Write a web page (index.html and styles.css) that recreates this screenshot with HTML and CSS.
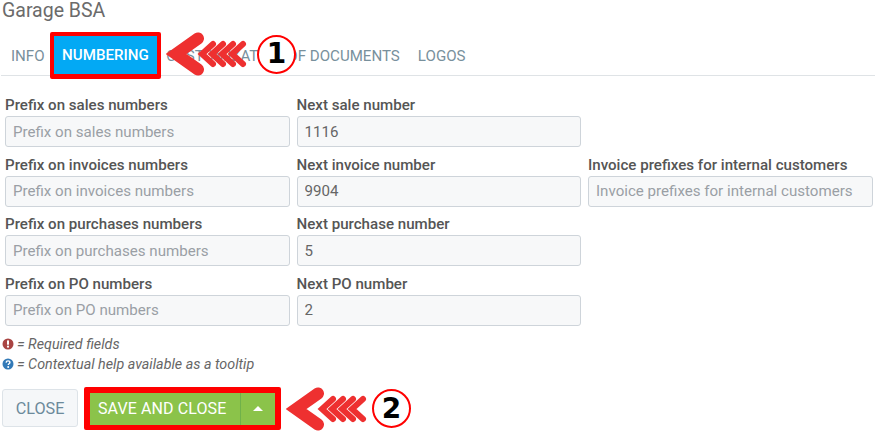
FILE: index.html
```html
<!DOCTYPE html>
<html lang="en">
<head>
<meta charset="utf-8">
<title>Garage BSA</title>
<link rel="stylesheet" href="styles.css">
</head>
<body>
<div class="page">
  <h1 class="title">Garage BSA</h1>
  <nav class="tabs">
    <a class="tab">INFO</a>
    <a class="tab active">NUMBERING</a>
    <a class="tab">CUSTOMIZATION OF DOCUMENTS</a>
    <a class="tab">LOGOS</a>
    <div class="callout callout-tab">
      <svg class="arrows" width="92" height="44" viewBox="0 0 92 44"><use href="#arrow-shape"/></svg>
      <span class="badge">1</span>
    </div>
  </nav>
  <form class="form">
    <label class="field"><span>Prefix on sales numbers</span><input placeholder="Prefix on sales numbers"></label>
    <label class="field"><span>Next sale number</span><input value="1116"></label>
    <div></div>
    <label class="field"><span>Prefix on invoices numbers</span><input placeholder="Prefix on invoices numbers"></label>
    <label class="field"><span>Next invoice number</span><input value="9904"></label>
    <label class="field"><span>Invoice prefixes for internal customers</span><input placeholder="Invoice prefixes for internal customers"></label>
    <label class="field"><span>Prefix on purchases numbers</span><input placeholder="Prefix on purchases numbers"></label>
    <label class="field"><span>Next purchase number</span><input value="5"></label>
    <div></div>
    <label class="field"><span>Prefix on PO numbers</span><input placeholder="Prefix on PO numbers"></label>
    <label class="field"><span>Next PO number</span><input value="2"></label>
  </form>
  <ul class="legend">
    <li><svg width="12" height="12" viewBox="0 0 12 12"><circle cx="6" cy="6" r="5.5" fill="#a94442"/><rect x="5" y="2.3" width="2" height="4.6" rx=".8" fill="#fff"/><circle cx="6" cy="8.7" r="1.1" fill="#fff"/></svg><em>= Required fields</em></li>
    <li><svg width="12" height="12" viewBox="0 0 12 12"><circle cx="6" cy="6" r="5.5" fill="#337ab7"/><path d="M4.1 4.6C4.2 3.5 5 2.9 6 2.9c1.1 0 1.9.7 1.9 1.6 0 1.3-1.6 1.3-1.6 2.5" fill="none" stroke="#fff" stroke-width="1.4"/><circle cx="6.2" cy="8.9" r="1" fill="#fff"/></svg><em>= Contextual help available as a tooltip</em></li>
  </ul>
  <div class="actions">
    <button class="btn-close" type="button">CLOSE</button>
    <div class="save-group">
      <button class="btn-save" type="button">SAVE AND CLOSE</button>
      <button class="btn-caret" type="button"><i></i></button>
    </div>
    <div class="callout callout-save">
      <svg class="arrows" width="92" height="44" viewBox="0 0 92 44"><use href="#arrow-shape"/></svg>
      <span class="badge">2</span>
    </div>
  </div>
</div>
<svg class="defs" width="0" height="0">
  <defs>
    <g id="arrow-shape" fill="none" stroke="#ee3030" stroke-linecap="round" stroke-linejoin="miter" stroke-miterlimit="10">
      <path d="M32 6.500 L10 22 L32 37.500" stroke-width="12"/>
      <path d="M47 12 L36 22 L47 32" stroke-width="6"/>
      <path d="M57 12 L46 22 L57 32" stroke-width="6"/>
      <path d="M67 12 L56 22 L67 32" stroke-width="6"/>
      <path d="M77 12 L66 22 L77 32" stroke-width="6"/>
    </g>
  </defs>
</svg>
</body>
</html>
```
FILE: styles.css
```css
* { box-sizing: border-box; }
html, body { margin: 0; padding: 0; }
body {
  width: 875px;
  height: 434px;
  overflow: hidden;
  background: #fff;
  font-family: Roboto, "Liberation Sans", sans-serif;
  font-size: 15.100px;
  color: #555;
}
.defs { position: absolute; }
.page { position: relative; padding-top: 0; }
.title {
  margin: 0 0 0 2px;
  font-size: 19.500px;
  line-height: 22px;
  font-weight: 400;
  color: #6b6b6b;
}
.tabs {
  position: relative;
  display: flex;
  align-items: center;
  gap: 18px;
  height: 43px;
  margin: 11px 0 0 1px;
  padding: 4px 0 0 10px;
  border-bottom: 1px solid #dfe3e6;
  font-size: 15.100px;
  color: #78909c;
}
.tab { white-space: nowrap; }
.tab.active {
  display: flex;
  align-items: center;
  height: 47px;
  margin: -1px -13px 0 -13px;
  padding: 0 8.500px;
  background: #03a9f4;
  color: #fff;
  font-weight: 500;
  border: 4px solid #f00;
  border-bottom-width: 5px;
  border-radius: 2px;
}
.callout {
  position: absolute;
  display: flex;
  align-items: center;
}
.callout-tab { left: 165px; top: -1px; }
.badge {
  width: 39px;
  height: 39px;
  margin-left: -1px;
  display: flex;
  align-items: center;
  justify-content: center;
  border: 2px solid #f00;
  border-radius: 50%;
  background: #fff;
  color: #000;
  font-family: "DejaVu Sans", sans-serif;
  font-size: 28px;
  font-weight: 700;
  line-height: 1;
}
.form {
  display: grid;
  grid-template-columns: repeat(3, 284.500px);
  column-gap: 7px;
  row-gap: 8.500px;
  margin: 20px 0 0 5px;
  width: 870px;
}
.field { display: flex; flex-direction: column; gap: 2px; }
.field span {
  font-weight: 500;
  color: #555;
  line-height: 18px;
  white-space: nowrap;
}
.field input {
  height: 31px;
  width: 100%;
  padding: 0 7px;
  border: 1px solid #ced4da;
  border-radius: 3px;
  background: #f7f8f9;
  font: 15.100px Roboto, "Liberation Sans", sans-serif;
  color: #666;
}
.field input::placeholder { color: #9a9fa5; opacity: 1; }
.legend {
  list-style: none;
  margin: 9px 0 0 2px;
  padding: 0;
  font-size: 14.300px;
  color: #666;
}
.legend li {
  display: flex;
  align-items: center;
  gap: 3px;
  height: 19.500px;
}
.actions {
  position: relative;
  display: flex;
  align-items: center;
  gap: 6px;
  margin: 13px 0 0 2px;
}
.btn-close {
  width: 76px;
  height: 38px;
  border: 1px solid #dde3e8;
  border-radius: 3px;
  background: #f5f7f9;
  color: #6c8a9b;
  font: 16.200px Roboto, "Liberation Sans", sans-serif;
}
.save-group {
  display: flex;
  height: 43px;
  border: 6px solid #f00;
  border-bottom-width: 5px;
  border-radius: 2px;
  background: #8bc34a;
}
.btn-save, .btn-caret {
  border: 0;
  background: #8bc34a;
  color: #fff;
  font: 16px Roboto, "Liberation Sans", sans-serif;
  padding: 0;
  white-space: nowrap;
}
.btn-save {
  width: 151px;
  padding-left: 8px;
  text-align: left;
  letter-spacing: .1px;
  border-right: 1px solid #6fb14a;
}
.btn-caret {
  width: 34px;
  display: flex;
  align-items: center;
  justify-content: center;
}
.btn-caret i {
  width: 0;
  height: 0;
  border-left: 5px solid transparent;
  border-right: 5px solid transparent;
  border-bottom: 5px solid #fff;
}
.callout-save { left: 284px; top: 0; }
.callout-save .badge { margin-left: -6px; }
```
